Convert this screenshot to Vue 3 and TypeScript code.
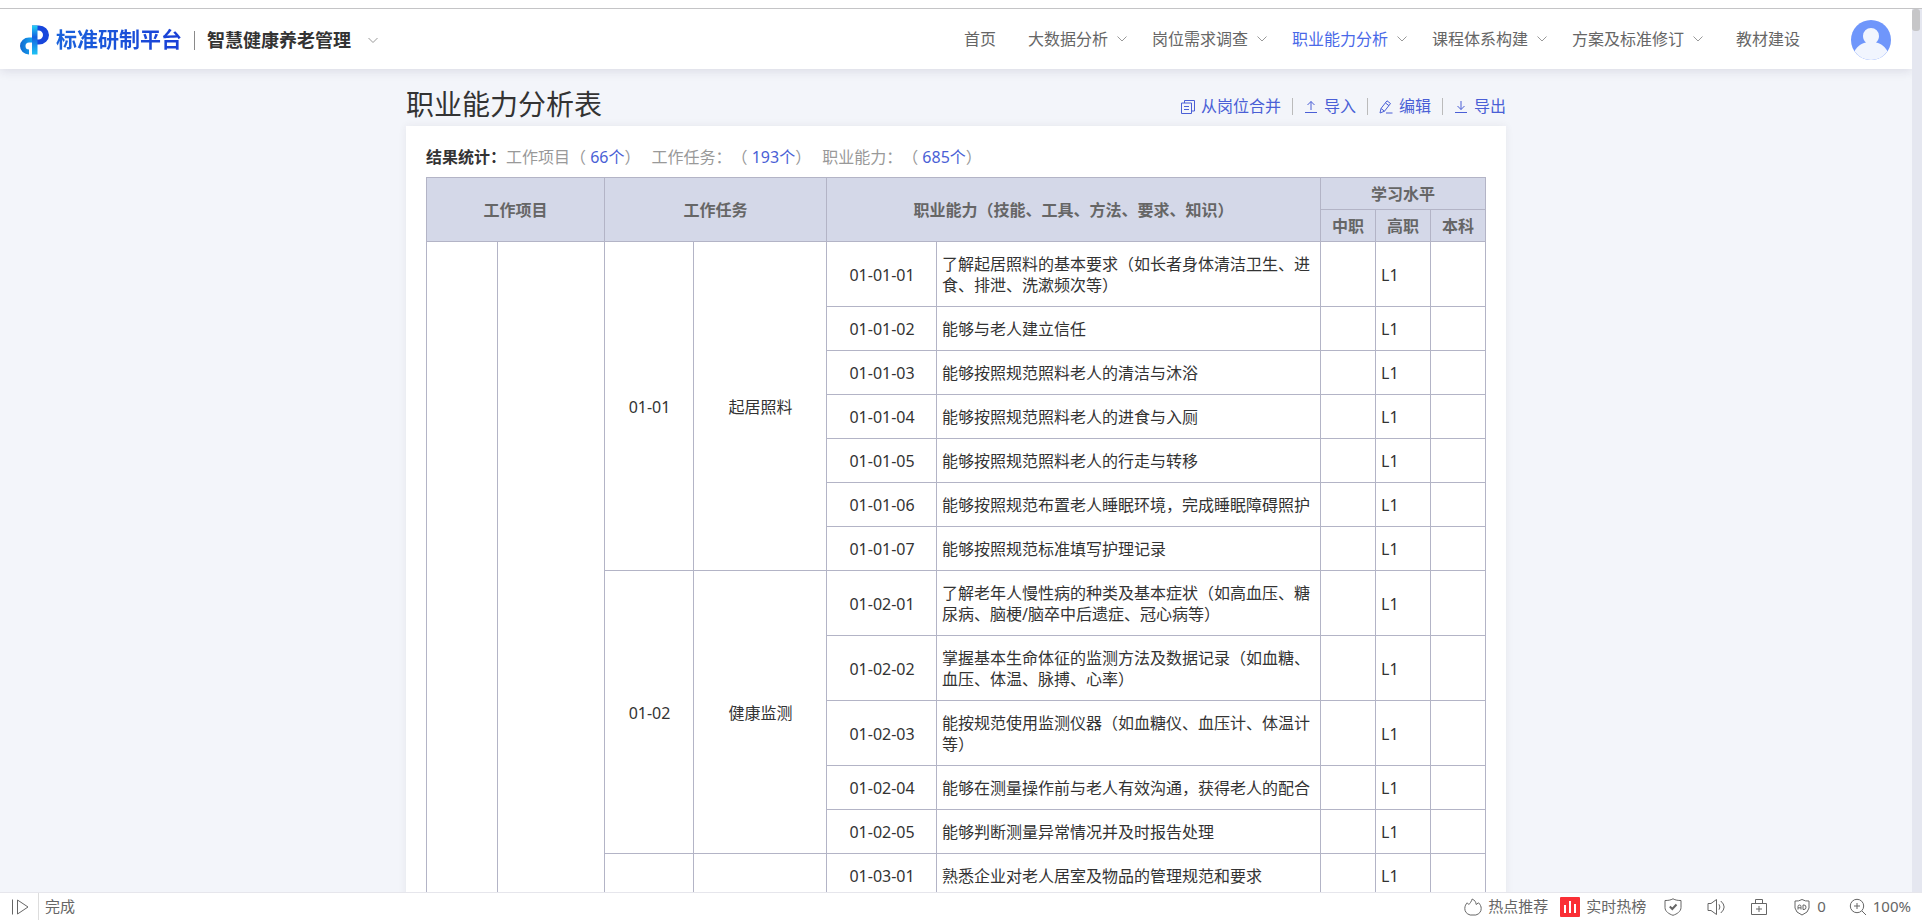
<script setup lang="ts">
interface NavItem {
  label: string
  menu: boolean
  active?: boolean
}

interface Ability {
  code: string
  text: string
  level: string
}

interface Task {
  code: string
  name: string
  abilities: Ability[]
}

interface Row {
  ability: Ability
  task: Task | null
  span: number
  first: boolean
}

const navItems: NavItem[] = [
  { label: '首页', menu: false },
  { label: '大数据分析', menu: true },
  { label: '岗位需求调查', menu: true },
  { label: '职业能力分析', menu: true, active: true },
  { label: '课程体系构建', menu: true },
  { label: '方案及标准修订', menu: true },
  { label: '教材建设', menu: false },
]

const stats = [
  { label: '工作项目', count: 66 },
  { label: '工作任务：', count: 193 },
  { label: '职业能力：', count: 685 },
]

const columns: string[] = [
  'w-item-code', 'w-item-name', 'w-task-code', 'w-task-name',
  'w-code', 'w-text', 'w-level', 'w-level', 'w-level',
]

const tasks: Task[] = [
  {
    code: '01-01',
    name: '起居照料',
    abilities: [
      { code: '01-01-01', text: '了解起居照料的基本要求（如长者身体清洁卫生、进食、排泄、洗漱频次等）', level: 'L1' },
      { code: '01-01-02', text: '能够与老人建立信任', level: 'L1' },
      { code: '01-01-03', text: '能够按照规范照料老人的清洁与沐浴', level: 'L1' },
      { code: '01-01-04', text: '能够按照规范照料老人的进食与入厕', level: 'L1' },
      { code: '01-01-05', text: '能够按照规范照料老人的行走与转移', level: 'L1' },
      { code: '01-01-06', text: '能够按照规范布置老人睡眠环境，完成睡眠障碍照护', level: 'L1' },
      { code: '01-01-07', text: '能够按照规范标准填写护理记录', level: 'L1' },
    ],
  },
  {
    code: '01-02',
    name: '健康监测',
    abilities: [
      { code: '01-02-01', text: '了解老年人慢性病的种类及基本症状（如高血压、糖尿病、脑梗/脑卒中后遗症、冠心病等）', level: 'L1' },
      { code: '01-02-02', text: '掌握基本生命体征的监测方法及数据记录（如血糖、血压、体温、脉搏、心率）', level: 'L1' },
      { code: '01-02-03', text: '能按规范使用监测仪器（如血糖仪、血压计、体温计等）', level: 'L1' },
      { code: '01-02-04', text: '能够在测量操作前与老人有效沟通，获得老人的配合', level: 'L1' },
      { code: '01-02-05', text: '能够判断测量异常情况并及时报告处理', level: 'L1' },
    ],
  },
  {
    code: '',
    name: '',
    abilities: [
      { code: '01-03-01', text: '熟悉企业对老人居室及物品的管理规范和要求', level: 'L1' },
    ],
  },
]

const rows: Row[] = tasks.flatMap((task, t) =>
  task.abilities.map((ability, i) => ({
    ability,
    task: i === 0 ? task : null,
    span: task.abilities.length,
    first: t === 0 && i === 0,
  })),
)
</script>

<template>
  <div class="window">
    <div class="window-edge"></div>

    <div class="viewport">
      <div class="page">
        <header class="header">
          <svg class="logo" viewBox="0 0 30 30" aria-hidden="true">
            <defs>
              <linearGradient id="logo-left" x1="0" y1="0" x2="1" y2="0">
                <stop offset="0" stop-color="#1268cf" />
                <stop offset="1" stop-color="#14a4f2" />
              </linearGradient>
              <linearGradient id="logo-stem" x1="0" y1="0" x2="0" y2="1">
                <stop offset="0" stop-color="#23d3f5" />
                <stop offset="0.4" stop-color="#1360e0" />
                <stop offset="1" stop-color="#1fc4f4" />
              </linearGradient>
            </defs>
            <path d="M12 12.500H9A9 8.500 0 0 0 9 29.500V24.500A3.500 3.500 0 0 1 9 17.500H12Z" fill="url(#logo-left)" />
            <path d="M12 0.500H19A10 9.500 0 0 1 19 19.500H12V14.500H18.500A4.500 4.500 0 0 0 18.500 5.500H12Z" fill="#1746dc" />
            <path d="M12 0.500H17.500V29.500H12Z" fill="url(#logo-stem)" />
          </svg>
          <span class="brand">标准研制平台</span>
          <span class="brand-line"></span>
          <button class="major" type="button">
            智慧健康养老管理
            <svg class="chevron" viewBox="0 0 12 12"><path d="M1.500 4L6 8.500L10.500 4" /></svg>
          </button>

          <nav class="nav">
            <a v-for="item in navItems" :key="item.label" href="#" class="nav-link"
              :class="{ active: item.active, plain: !item.menu }">
              {{ item.label }}
              <svg v-if="item.menu" class="chevron" viewBox="0 0 12 12"><path d="M1.500 3.500L6 8L10.500 3.500" /></svg>
            </a>
          </nav>

          <button class="avatar" type="button" aria-label="个人中心">
            <svg viewBox="0 0 40 40">
              <circle cx="20" cy="20" r="20" fill="#6f96fb" />
              <path d="M20 8a8 8 0 0 0-8 8c0 3 1.200 5 3 6.500C9.500 23.500 5 28 3.500 31.300A20 20 0 0 0 36.500 31.300C35 28 30.500 23.500 25 22.500c1.800-1.500 3-3.500 3-6.500a8 8 0 0 0-8-8Z" fill="#f1f5fe" />
            </svg>
          </button>
        </header>

        <main class="content">
          <div class="title-row">
            <h1 class="title">职业能力分析表</h1>
            <div class="actions">
              <button class="action" type="button">
                <svg viewBox="0 0 14 14"><path d="M3.500 3V.5H13.500V11H11" /><path d="M.5 3H10.500V13.500H.5Z" /><path d="M3 6.500H8M3 9.500H8" /></svg>
                从岗位合并
              </button>
              <button class="action" type="button">
                <svg viewBox="0 0 14 14"><path d="M1 12.500H13M7 10V1.500M3.500 5L7 1.500L10.500 5" /></svg>
                导入
              </button>
              <button class="action" type="button">
                <svg viewBox="0 0 14 14"><path d="M1 13L2 8.500L8 .8L11.500 3.500L5.500 11.200ZM6.500 3L10 5.700M2 8.500L5.500 11.200M7 13H13.500" /></svg>
                编辑
              </button>
              <button class="action" type="button">
                <svg viewBox="0 0 14 14"><path d="M1 12.500H13M7 1V9.500M3.500 6L7 9.500L10.500 6" /></svg>
                导出
              </button>
            </div>
          </div>

          <section class="card">
            <div class="stats">
              <strong class="stats-title">结果统计：</strong>
              <span v-for="s in stats" :key="s.label" class="stat">{{ s.label }}（ <b class="count">{{ s.count }}个</b>）</span>
            </div>

            <table class="grid">
              <colgroup>
                <col v-for="(c, i) in columns" :key="i" :class="c" />
              </colgroup>
              <thead>
                <tr>
                  <th colspan="2" rowspan="2">工作项目</th>
                  <th colspan="2" rowspan="2">工作任务</th>
                  <th colspan="2" rowspan="2">职业能力（技能、工具、方法、要求、知识）</th>
                  <th colspan="3">学习水平</th>
                </tr>
                <tr>
                  <th>中职</th>
                  <th>高职</th>
                  <th>本科</th>
                </tr>
              </thead>
              <tbody>
                <tr v-for="row in rows" :key="row.ability.code">
                  <template v-if="row.first">
                    <td :rowspan="rows.length"></td>
                    <td :rowspan="rows.length"></td>
                  </template>
                  <template v-if="row.task">
                    <td class="center" :rowspan="row.span">{{ row.task.code }}</td>
                    <td class="center" :rowspan="row.span">{{ row.task.name }}</td>
                  </template>
                  <td class="center">{{ row.ability.code }}</td>
                  <td>{{ row.ability.text }}</td>
                  <td></td>
                  <td>{{ row.ability.level }}</td>
                  <td></td>
                </tr>
              </tbody>
            </table>
          </section>
        </main>
      </div>
      <div class="scrollbar"><div class="thumb"></div></div>
    </div>

    <footer class="status">
      <button class="tool panel-toggle" type="button" aria-label="侧栏">
        <svg class="icon" viewBox="0 0 18 18"><path d="M1.500 1.500V16.500M6.500 2V16L17 9Z" /></svg>
      </button>
      <span class="state">完成</span>

      <div class="tools">
        <button class="tool" type="button">
          <svg class="icon" viewBox="0 0 18 18"><path d="M6.200 17C2.500 16 .8 13.500.8 10.500C.8 8 2 6 3.200 4.800L4.800 6.500C5.800 5.500 7.500 3.500 8.200 1C10.500 2 12 4 12.200 6.500L14.500 4.800C16.300 6.500 17.200 8.500 17.200 10.500C17.200 13.500 15.500 16 11.800 17Z" /></svg>
          热点推荐
        </button>
        <button class="tool hot" type="button">
          <svg class="hot-icon" viewBox="0 0 20 20"><rect width="20" height="20" rx="1" fill="#fa2f35" /><path d="M5 8V16M10 4V16M15 7V16" stroke="#fff" stroke-width="2" /></svg>
          实时热榜
        </button>
        <button class="tool" type="button" aria-label="安全">
          <svg class="icon" viewBox="0 0 18 18"><path d="M9 .8C11.500 2.200 14 2.500 17 2.500V9.500C17 13.500 13 16 9 17.300C5 16 1 13.500 1 9.500V2.500C4 2.500 6.500 2.200 9 .8Z" /><path class="heavy" d="M5.800 8.500L8.300 11L12.500 6.500" /></svg>
        </button>
        <button class="tool" type="button" aria-label="声音">
          <svg class="icon" viewBox="0 0 18 18"><path d="M1 5.500H4L9.500 1.500V16.500L4 12.500H1ZM12 6.300Q13.800 9 12 11.700M13.800 3Q20.500 9 13.800 15" /></svg>
        </button>
        <button class="tool" type="button" aria-label="工具箱">
          <svg class="icon" viewBox="0 0 18 18"><path d="M1.500 5.500H16.500V16.500H1.500ZM5.500 5.500V1.500H12.500V5.500M9 8V14M6 11H12" /></svg>
        </button>
        <button class="tool" type="button" aria-label="广告拦截 0">
          <svg class="icon" viewBox="0 0 18 18"><path d="M9 1.500Q12.500 3.500 16 3V10Q15.500 14.500 9 17Q2.500 14.500 2 10V3Q5.500 3.500 9 1.500Z" /><path d="M5 11.500V8.500Q5 7 6.500 7Q8 7 8 8.500V11.500M5 9.800H8M10 7V11.500H11Q13 11.500 13 9.200Q13 7 11 7Z" /></svg>
          0
        </button>
        <button class="tool zoom" type="button">
          <svg class="icon" viewBox="0 0 18 18"><circle cx="8" cy="8" r="6.700" /><path d="M13 13L17 17M8 5V11M5 8H11" /></svg>
          100%
        </button>
      </div>
    </footer>
  </div>
</template>

<style>
html,
body {
  height: 100%;
  overflow: hidden;
}
</style>

<style scoped>
.window {
  display: flex;
  flex-direction: column;
  height: 100vh;
  background: #fff;
  color: #333;
  font-family: "Noto Sans", "Noto Sans CJK SC", sans-serif;
  font-size: 16px;
  line-height: 21px;
  text-spacing-trim: space-all;
}

button {
  display: inline-flex;
  align-items: center;
  margin: 0;
  padding: 0;
  border: 0;
  background: none;
  color: inherit;
  font: inherit;
  cursor: pointer;
}

svg {
  flex: none;
  fill: none;
}

.window-edge {
  flex: none;
  height: 8px;
  border-bottom: 1px solid #c4c4c6;
}

.viewport {
  display: flex;
  flex: 1;
  min-height: 0;
}

.page {
  flex: 1;
  min-width: 0;
  overflow: hidden;
  background: #f3f5fa;
}

.scrollbar {
  width: 10px;
  background: #e5e7f0;
}

.thumb {
  width: 8px;
  height: 22px;
  border-radius: 3px;
  background: #c6c6c8;
}

.header {
  position: relative;
  z-index: 1;
  display: flex;
  align-items: center;
  height: 60px;
  padding: 2px 21px 0 20px;
  box-sizing: border-box;
  background: #fff;
  box-shadow: 0 2px 10px rgba(40, 30, 70, 0.12);
}

.logo {
  width: 30px;
  height: 30px;
}

.brand {
  margin-left: 6px;
  padding-bottom: 2px;
  background: linear-gradient(90deg, #1a63dc, #1a3fd6);
  background-clip: text;
  color: transparent;
  font-size: 21px;
  font-weight: 700;
  line-height: 30px;
}

.brand-line {
  width: 1px;
  height: 19px;
  margin: 0 12px;
  background: #8a8a8a;
}

.major {
  gap: 16px;
  font-size: 18px;
  font-weight: 700;
}

.chevron {
  width: 12px;
  height: 12px;
  stroke: #999;
  stroke-width: 1;
}

.nav {
  display: flex;
  gap: 24px;
  margin-left: auto;
  padding-bottom: 2px;
}

.nav-link {
  display: flex;
  align-items: center;
  gap: 8px;
  color: #666;
  text-decoration: none;
}

.nav-link.active {
  color: #4a69e8;
}

.nav-link.plain:first-child {
  margin-right: 8px;
}

.nav-link.plain:last-child {
  margin-left: 8px;
}

.avatar {
  margin-left: 51px;
}

.avatar svg {
  width: 40px;
  height: 40px;
}

.content {
  width: 1100px;
  max-width: 100%;
  margin: 0 auto;
}

.title-row {
  display: flex;
  align-items: center;
  justify-content: space-between;
  height: 57px;
  padding-top: 12px;
  box-sizing: border-box;
}

.title {
  margin: 0;
  font-size: 28px;
  font-weight: 400;
  line-height: 40px;
}

.actions {
  display: flex;
  align-items: center;
  padding-top: 6px;
}

.action {
  gap: 6px;
  color: #4a5fd6;
}

.action svg {
  width: 14px;
  height: 14px;
  stroke: currentColor;
  stroke-width: 1;
}

.action + .action::before {
  content: "";
  width: 1px;
  height: 17px;
  margin: 0 5px 0 11px;
  background: #bbb;
}

.card {
  padding: 21px 20px 40px;
  background: #fff;
  box-shadow: 0 0 8px rgba(50, 40, 60, 0.07);
}

.stats {
  display: flex;
  margin-bottom: 9px;
  color: #999;
}

.stats-title {
  color: #333;
}

.stat {
  margin-right: 11px;
}

.count {
  color: #4a5fd6;
  font-weight: 400;
}

.grid {
  width: 100%;
  border-collapse: collapse;
  table-layout: fixed;
}

.grid th,
.grid td {
  border: 1px solid #b3b4c6;
}

.grid th {
  padding: 6px 0 4px;
  background: #d4d8e8;
  color: #666;
  font-weight: 700;
}

.grid td {
  padding: 12px 4px 10px 5px;
  vertical-align: middle;
}

.grid td.center {
  text-align: center;
}

.w-item-code {
  width: 71px;
}

.w-item-name {
  width: 107px;
}

.w-task-code {
  width: 89px;
}

.w-task-name {
  width: 133px;
}

.w-code {
  width: 110px;
}

.w-level {
  width: 55px;
}

.status {
  display: flex;
  flex: none;
  align-items: center;
  height: 28px;
  padding: 0 11px;
  box-sizing: border-box;
  border-top: 1px solid #e6e6ec;
  color: #666;
  font-size: 15px;
}

.panel-toggle {
  padding-right: 9px;
  border-right: 1px solid #ddd;
}

.state {
  margin-left: 6px;
}

.tools {
  display: flex;
  align-items: center;
  gap: 25px;
  margin-left: auto;
}

.tool {
  gap: 6px;
  height: 27px;
}

.tool.hot {
  margin: 0 -7px 0 -13px;
}

.tool.zoom {
  margin-left: -2px;
}

.hot-icon {
  width: 20px;
  height: 20px;
}

.icon {
  width: 18px;
  height: 18px;
  stroke: #666;
  stroke-width: 1;
}

.icon .heavy {
  stroke-width: 2;
}
</style>
